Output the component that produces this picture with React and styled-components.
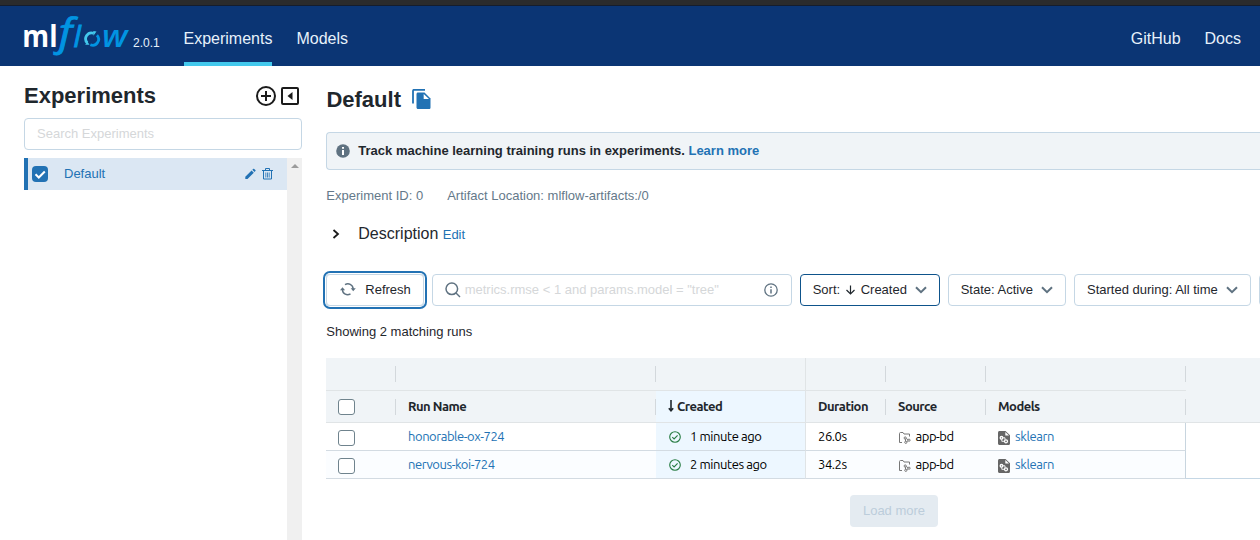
import React from "react";
import styled, { createGlobalStyle } from "styled-components";

const GlobalStyle = createGlobalStyle`
  * { box-sizing: border-box; }
  body {
    margin: 0;
    background: #fff;
    color: #1f272d;
    font: 13px/20px "Liberation Sans", Arial, sans-serif;
    overflow: hidden;
  }
`;

const Page = styled.div`
  height: 540px;
  width: 1260px;
  overflow: hidden;
  display: flex;
  flex-direction: column;
`;
const BrowserEdge = styled.div`
  flex: none;
  height: 6px;
  background: #2b2b2b;
  border-bottom: 1px solid #151d2c;
`;
const Header = styled.header`
  flex: none;
  height: 60px;
  background: #0b3574;
  display: flex;
  padding: 0 19px 0 24px;
`;
const Logo = styled.svg`
  flex: none;
  width: 106px;
  height: 60px;
  overflow: visible;
`;
const Version = styled.span`
  width: 53.5px;
  padding: 27px 0 0 3px;
  font-size: 12px;
  color: #e7f1fb;
`;
const NavLink = styled.a`
  height: 60px;
  padding-top: 23px;
  margin-right: ${(p) => p.$gap ?? 24}px;
  font-size: 16px;
  color: #e7f1fb;
  border-bottom: 4px solid ${(p) => (p.$active ? "#43c9ed" : "transparent")};
`;
const Spacer = styled.div`
  flex: 1;
`;
const Body = styled.div`
  flex: 1;
  min-height: 0;
  display: flex;
`;
const Sidebar = styled.aside`
  flex: none;
  width: 302px;
  padding: 16px 0 0 24px;
  display: flex;
  flex-direction: column;
`;
const SidebarTitle = styled.div`
  display: flex;
  align-items: center;
  height: 28px;
  padding-right: 3px;
  gap: 4px;
`;
const Title = styled.h1`
  margin: 0;
  font-size: 22px;
  line-height: 28px;
  font-weight: 700;
  flex: ${(p) => (p.$grow ? 1 : "none")};
`;
const SearchBox = styled.div`
  height: 32px;
  margin: 8px 0;
  padding: 5px 12px;
  border: 1px solid #c5d7e5;
  border-radius: 4px;
  color: #d5d7d9;
`;
const ExperimentList = styled.div`
  flex: 1;
  display: flex;
`;
const Experiment = styled.div`
  width: 263px;
  height: 32px;
  display: flex;
  align-items: center;
  gap: 5px;
  padding: 0 14px 0 4px;
  border-left: 4px solid #2272b4;
  background: #dbe7f3;
  color: #2272b4;
`;
const CheckedBox = styled.span`
  width: 16px;
  height: 16px;
  border-radius: 4px;
  background: #2272b4;
  display: flex;
  margin-right: 11px;
`;
const ExperimentName = styled.span`
  flex: 1;
`;
const Scrollbar = styled.div`
  width: 15px;
  background: #f0f0f0;
  display: flex;
  justify-content: center;
  padding-top: 6px;
`;
const Main = styled.main`
  flex: 1;
  min-width: 0;
  padding-left: 24px;
  display: flex;
  flex-direction: column;
`;
const TitleRow = styled.div`
  display: flex;
  align-items: center;
  gap: 11px;
  padding: 20px 0 0 0.400px;
  height: 48px;
`;
const CopyIcon = styled.svg`
  margin-bottom: 1px;
`;
const Banner = styled.div`
  height: 38px;
  margin-top: 18px;
  padding: 0 9px;
  display: flex;
  align-items: center;
  border: 1px solid #c5d7e5;
  border-right: 0;
  border-radius: 4px 0 0 4px;
  background: #f0f4f7;
  font-weight: 700;
`;
const BannerText = styled.span`
  margin: 0 3.600px 0 8.300px;
`;
const Link = styled.a`
  color: #2272b4;
  margin-top: ${(p) => p.$shift ?? 0}px;
`;
const Meta = styled.div`
  display: flex;
  gap: 24px;
  margin-top: 16px;
  padding-left: 0.300px;
  color: #64798a;
`;
const Description = styled.div`
  display: flex;
  align-items: center;
  height: 24px;
  margin-top: 16px;
  padding-left: 5px;
`;
const DescriptionLabel = styled.span`
  font-size: 16px;
  margin: 0 4.400px 0 17.300px;
`;
const Toolbar = styled.div`
  display: flex;
  margin-top: 28px;
  height: 32px;
`;
const Control = styled.div`
  flex: none;
  width: ${(p) => p.$width}px;
  height: 32px;
  margin-right: ${(p) => p.$gap ?? 8}px;
  padding: ${(p) => p.$pad ?? "0 12px"};
  display: flex;
  align-items: center;
  border: 1px solid ${(p) => (p.$active ? "#0e538b" : "#c5d7e5")};
  border-radius: 4px;
  white-space: nowrap;
  color: ${(p) => (p.$muted ? "#d5d7d9" : "#1f272d")};
  box-shadow: ${(p) => (p.$focused ? "0 0 0 1px #fff, 0 0 0 3px #2272b4" : "none")};
`;
const Label = styled.span`
  flex: 1;
  margin-left: ${(p) => p.$left ?? 0}px;
`;
const SortLabel = styled(Label)`
  display: flex;
  align-items: center;
  gap: 5px;
`;
const Count = styled.div`
  margin-top: 16px;
  padding-left: 0.300px;
`;
const Table = styled.div`
  margin-top: 16px;
  flex: none;
  font-family: Ubuntu, "Noto Sans", sans-serif;
  font-size: 13px;
  letter-spacing: -0.5px;
`;
const Row = styled.div`
  display: grid;
  grid-template-columns: 70px 260px 150px 80px 100px 200px 1fr;
  height: ${(p) => (p.$head ? 32 : 28)}px;
  background: ${(p) => (p.$head ? "#f0f4f7" : p.$even ? "#fbfdff" : "#fff")};
  font-weight: ${(p) => (p.$head ? 700 : 400)};
  color: ${(p) => (p.$head ? "#1f272d" : "#000")};
`;
const GroupRow = styled(Row)`
  height: 33px;
`;
const HeadCell = styled.div`
  display: flex;
  align-items: center;
  padding-left: 12px;
  border-bottom: 1px solid #e0e4e6;
  border-right: ${(p) => (p.$solid ? "1px solid #e0e4e6" : 0)};
  background: ${(p) => (p.$sorted ? "#edf7ff" : "transparent")};
  white-space: nowrap;
`;
const HeadText = styled.span`
  flex: 1;
  display: flex;
  align-items: center;
  gap: 3px;
  margin-top: ${(p) => p.$top ?? -2}px;
`;
const Divider = styled.i`
  width: 1px;
  height: 16px;
  background: #d3d8dc;
`;
const Filler = styled.div`
  background: ${(p) => (p.$head ? "#f0f4f7" : "#fff")};
  border-bottom: ${(p) => (p.$line ? `1px solid ${p.$line}` : 0)};
`;
const Cell = styled.div`
  display: flex;
  align-items: center;
  gap: ${(p) => p.$gap ?? 0}px;
  padding-left: ${(p) => p.$pad ?? 12}px;
  border-bottom: 1px solid #d3dbe2;
  border-right: ${(p) => (p.$edge ? `1px solid ${p.$edge}` : 0)};
  background: ${(p) => (p.$sorted ? "#edf7ff" : "transparent")};
  color: ${(p) => (p.$link ? "#2272b4" : "inherit")};
  letter-spacing: ${(p) => p.$track ?? -0.45}px;
  white-space: nowrap;
`;
const CellText = styled.span`
  margin-top: -2px;
`;
const Checkbox = styled.span`
  width: 17px;
  height: 16px;
  margin-top: ${(p) => p.$top ?? 0}px;
  border: 1px solid #6f838d;
  border-radius: 3px;
  background: #fff;
`;
const LoweredIcon = styled.svg`
  margin-top: 3px;
`;
const LoadMore = styled.div`
  flex: none;
  width: 88px;
  height: 32px;
  margin: 16px 0 0 524px;
  padding: 6px 0;
  border-radius: 4px;
  background: #e4ebf1;
  color: #bccddb;
  text-align: center;
`;

const Chevron = () => (
  <svg width="12" height="8" viewBox="0 0 12 8" fill="none" stroke="#5f7281" strokeWidth="2">
    <path d="M1 1.2 6 6.2 11 1.2" />
  </svg>
);

const StatusIcon = () => (
  <svg width="12" height="12" viewBox="0 0 12 12" fill="none" stroke="#277c43" strokeWidth="1.1">
    <circle cx="6" cy="6" r="5.3" />
    <path d="M3.3 6.2 5.1 8 8.6 4.3" />
  </svg>
);

const ProjectIcon = () => (
  <LoweredIcon width="13" height="12" viewBox="0 0 13 12" fill="none" stroke="#777" strokeWidth="1">
    <path d="M4 10.500H1.500V1.500C1.500.9 1.900.5 2.500.5H5l1 1.500h5.500v2.500" />
    <circle cx="7.200" cy="6" r="1.100" />
    <circle cx="11" cy="8.200" r="1.100" />
    <circle cx="7.800" cy="10.300" r="1.100" />
    <path d="M8.200 6.500 10 7.700M10 8.800 8.800 9.700M7.300 7l.3 2.200" />
  </LoweredIcon>
);

const ModelIcon = () => (
  <LoweredIcon width="12" height="14" viewBox="0 0 12 14">
    <path d="M1.500 0h6L12 4.300v8.200c0 .8-.6 1.500-1.400 1.500H1.500C.7 14 0 13.300 0 12.500V1.500C0 .7.7 0 1.500 0Z" fill="#666" />
    <path d="M7.300 1v3.600H11Z" fill="#fff" />
    <g fill="none" stroke="#fff" strokeWidth="1.300">
      <circle cx="3.500" cy="6.800" r="1.300" />
      <circle cx="8" cy="10.300" r="1.500" />
      <path d="M4.800 6.800h2.200v2M3.800 8.200v2.100h2.700" strokeWidth="0.900" />
    </g>
  </LoweredIcon>
);

const MlflowLogo = () => (
  <Logo viewBox="24 6 106 60" fontFamily="Open Sans, sans-serif">
    <text x="22.300" y="47" fontSize="30" fontWeight="700" fill="#fff" textLength="35.200" lengthAdjust="spacingAndGlyphs">ml</text>
    <g fill="#0194e2" stroke="#0194e2" strokeWidth="0.900" fontStyle="italic">
      <text x="58.800" y="46.300" fontSize="38.500" fontWeight="400" textLength="13.600" lengthAdjust="spacingAndGlyphs">f</text>
      <text x="73.500" y="46.700" fontSize="29.500" fontWeight="400">l</text>
    </g>
    <text x="102" y="47" fontSize="30" fontWeight="600" fontStyle="italic" fill="#0194e2" textLength="25.500" lengthAdjust="spacingAndGlyphs">w</text>
    <g fill="none" strokeWidth="2.800">
      <path d="M87.200 42.800A5.900 5.900 0 0 1 93.600 33.300" stroke="#43c9ed" />
      <path d="M96.900 35.200A5.900 5.900 0 0 1 90.300 44.700" stroke="#0194e2" />
    </g>
    <path d="M93.300 31 96.500 31.400 93.400 35.700Z" fill="#43c9ed" />
    <path d="M85.200 44.800 87.300 41.500 89.500 44.800Z" fill="#43c9ed" />
  </Logo>
);

const runs = [
  { name: "honorable-ox-724", created: "1 minute ago", duration: "26.0s" },
  { name: "nervous-koi-724", created: "2 minutes ago", duration: "34.2s" },
];

export default function App() {
  return (
    <Page>
      <GlobalStyle />
      <BrowserEdge />
      <Header>
        <MlflowLogo />
        <Version>2.0.1</Version>
        <NavLink $active>Experiments</NavLink>
        <NavLink>Models</NavLink>
        <Spacer />
        <NavLink>GitHub</NavLink>
        <NavLink $gap={0}>Docs</NavLink>
      </Header>
      <Body>
        <Sidebar>
          <SidebarTitle>
            <Title $grow>Experiments</Title>
            <svg width="22" height="22" viewBox="0 0 22 22" fill="none" stroke="#1b1b1b" strokeWidth="2">
              <circle cx="11" cy="11" r="9" />
              <path d="M11 6v10M6 11h10" />
            </svg>
            <svg width="18" height="18" viewBox="0 0 18 18" fill="none" stroke="#1b1b1b" strokeWidth="2">
              <rect x="1" y="1" width="16" height="16" rx="1" />
              <path d="M11.500 5v8L6.500 9Z" fill="#1b1b1b" stroke="none" />
            </svg>
          </SidebarTitle>
          <SearchBox>Search Experiments</SearchBox>
          <ExperimentList>
            <Experiment>
              <CheckedBox>
                <svg width="16" height="16" viewBox="0 0 16 16" fill="none" stroke="#fff" strokeWidth="2">
                  <path d="m3.500 8.200 3.300 3.300 6-6" />
                </svg>
              </CheckedBox>
              <ExperimentName>Default</ExperimentName>
              <svg width="12" height="12" viewBox="0.700 0 12 12" fill="#2272b4">
                <path d="M1 8.800 7.300 2.500l2.200 2.200L3.200 11H1ZM8 1.800l.9-.9c.3-.3.7-.3 1 0L11.100 2.100c.3.3.3.7 0 1l-.9.900Z" />
              </svg>
              <svg width="11" height="12" viewBox="0.500 0 11 12" fill="none" stroke="#2272b4">
                <path d="M.5 2.500h11M4 2.500V.5h4v2M2 2.500v8.500h8v-8.500" />
                <path d="M4.300 4.500v5M6 4.500v5M7.700 4.500v5" strokeWidth="0.800" />
              </svg>
            </Experiment>
            <Scrollbar>
              <svg width="8" height="4" viewBox="0 0 8 4" fill="#9b9b9b">
                <path d="M0 4 4 0l4 4Z" />
              </svg>
            </Scrollbar>
          </ExperimentList>
        </Sidebar>
        <Main>
          <TitleRow>
            <Title>Default</Title>
            <CopyIcon width="20" height="21" viewBox="0.500 0.500 20 21">
              <path d="M1.500 15V2.500C1.500 1.900 1.900 1.300 2.500 1.300H13.500" fill="none" stroke="#2272b4" strokeWidth="1.800" />
              <path d="M6.500 4h6.500L19 10v9c0 1-.6 1.500-1.500 1.500H6.500c-.9 0-1.500-.6-1.500-1.500V5.500C5 4.600 5.600 4 6.500 4Z" fill="#2272b4" />
              <path d="M12.200 5.500v5h5.300Z" fill="#fff" />
            </CopyIcon>
          </TitleRow>
          <Banner>
            <svg width="14" height="14" viewBox="0 0 14 14">
              <circle cx="7" cy="7" r="6.800" fill="#5f7281" />
              <path d="M6 3h2v1.700H6ZM6 6h2v5H6Z" fill="#fff" />
            </svg>
            <BannerText>Track machine learning training runs in experiments.</BannerText>
            <Link>Learn more</Link>
          </Banner>
          <Meta>
            <span>Experiment ID: 0</span>
            <span>Artifact Location: mlflow-artifacts:/0</span>
          </Meta>
          <Description>
            <svg width="10" height="10" viewBox="0 0 10 10" fill="none" stroke="#1b1b1b" strokeWidth="1.800">
              <path d="m2.500 1 4.500 4-4.500 4" />
            </svg>
            <DescriptionLabel>Description</DescriptionLabel>
            <Link $shift={2}>Edit</Link>
          </Description>
          <Toolbar>
            <Control $width={98} $pad="0 0 0 13px" $focused>
              <svg width="16" height="14" viewBox="0 0 16 14" fill="none" stroke="#5f7281" strokeWidth="1.500">
                <path d="M5 1.700C8.500-.3 12.800 1.500 13.200 6M10.500 10.800C7 12.900 2.700 11 2.500 7" />
                <path d="M10.700 5.300h5.100l-2.600 2.900ZM0 7.200h5.100L2.500 4.300Z" fill="#5f7281" stroke="none" />
              </svg>
              <Label $left={9.3}>Refresh</Label>
            </Control>
            <Control $width={360} $pad="0 13px 0 12px" $muted>
              <svg width="16" height="16" viewBox="0 0 16 16" fill="none" stroke="#5f7281" strokeWidth="1.500">
                <circle cx="6.800" cy="6.800" r="5.800" />
                <path d="m11 11 4 4" />
              </svg>
              <Label $left={3.7}>metrics.rmse &lt; 1 and params.model = "tree"</Label>
              <svg width="14" height="14" viewBox="0 0 14 14" fill="none" stroke="#5f7281" strokeWidth="1.300">
                <circle cx="7" cy="7" r="6.200" />
                <path d="M7 3.500v1.500M7 6.300v4.200" strokeWidth="1.500" />
              </svg>
            </Control>
            <Control $width={140} $active>
              <SortLabel $left={-0.3}>
                Sort:
                <svg width="10.500" height="12" viewBox="0 0 10.500 12" fill="none" stroke="#1f272d" strokeWidth="1.200">
                  <path d="M5.500 1.500v8.500M1.500 6l4 4 4-4" />
                </svg>
                Created
              </SortLabel>
              <Chevron />
            </Control>
            <Control $width={118}>
              <Label $left={-0.3}>State: Active</Label>
              <Chevron />
            </Control>
            <Control $width={177}>
              <Label>Started during: All time</Label>
              <Chevron />
            </Control>
            <Control $width={100} />
          </Toolbar>
          <Count>Showing 2 matching runs</Count>
          <Table>
            <GroupRow $head>
              <HeadCell><HeadText /><Divider /></HeadCell>
              <HeadCell><HeadText /><Divider /></HeadCell>
              <HeadCell $solid />
              <HeadCell><HeadText /><Divider /></HeadCell>
              <HeadCell><HeadText /><Divider /></HeadCell>
              <HeadCell><HeadText /><Divider /></HeadCell>
              <Filler $head />
            </GroupRow>
            <Row $head>
              <HeadCell><HeadText $top={0}><Checkbox /></HeadText><Divider /></HeadCell>
              <HeadCell><HeadText>Run Name</HeadText><Divider /></HeadCell>
              <HeadCell $sorted $solid>
                <HeadText>
                  <svg width="6" height="12" viewBox="0 0 6 12" fill="none" stroke="#1f272d" strokeWidth="1.600">
                    <path d="M3 0v11M.8 8.300 3 10.800l2.200-2.500" />
                  </svg>
                  Created
                </HeadText>
              </HeadCell>
              <HeadCell><HeadText>Duration</HeadText><Divider /></HeadCell>
              <HeadCell><HeadText>Source</HeadText><Divider /></HeadCell>
              <HeadCell><HeadText>Models</HeadText><Divider /></HeadCell>
              <Filler $head $line="#e0e4e6" />
            </Row>
            {runs.map((run, i) => (
              <Row key={run.name} $even={i === 1}>
                <Cell><Checkbox $top={3} /></Cell>
                <Cell $link><CellText>{run.name}</CellText></Cell>
                <Cell $sorted $edge="#e0e4e6" $pad={13} $gap={9} $track={-0.42}>
                  <StatusIcon /><CellText>{run.created}</CellText>
                </Cell>
                <Cell><CellText>{run.duration}</CellText></Cell>
                <Cell $gap={4.5}><ProjectIcon /><CellText>app-bd</CellText></Cell>
                <Cell $link $gap={5} $edge="#c8d5df" $track={-0.38}>
                  <ModelIcon /><CellText>sklearn</CellText>
                </Cell>
                <Filler $line={i === 1 ? "#c5d7e5" : undefined} />
              </Row>
            ))}
          </Table>
          <LoadMore>Load more</LoadMore>
        </Main>
      </Body>
    </Page>
  );
}
